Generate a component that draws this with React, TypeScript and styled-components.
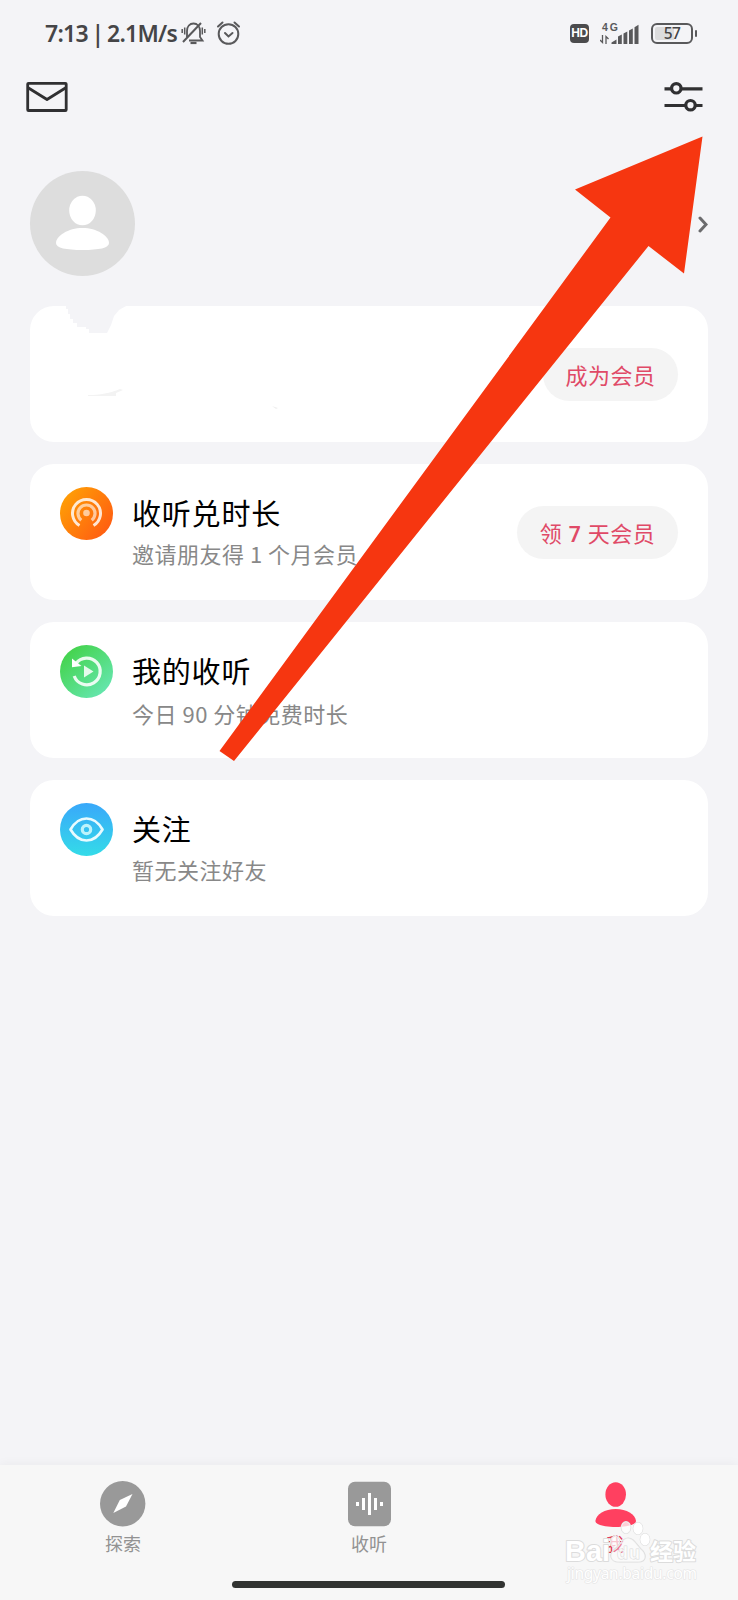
import React from 'react';
import styled, { createGlobalStyle } from 'styled-components';

const GlobalStyle = createGlobalStyle`
  * { box-sizing: border-box; }
  body {
    margin: 0;
    background: #f4f4f7;
    font-family: 'Noto Sans', 'Noto Sans CJK SC', sans-serif;
  }
  svg { display: block; flex: none; }
`;

const Screen = styled.div`
  position: relative;
  display: flex;
  flex-direction: column;
  width: 738px;
  height: 1600px;
  overflow: hidden;
  background: #f4f4f7;
`;

const StatusBar = styled.header`
  display: flex;
  align-items: center;
  height: 66px;
  padding: 0 41px 0 45px;
`;

const Clock = styled.span`
  width: 136px;
  font: 600 23px/30px 'Noto Sans', sans-serif;
  letter-spacing: -0.75px;
  word-spacing: -1.6px;
  color: #454547;
  white-space: nowrap;
`;

const StatusIcons = styled.div<{ $end?: boolean }>`
  display: flex;
  align-items: center;
  gap: ${(p) => (p.$end ? 11 : 10)}px;
  margin-left: ${(p) => (p.$end ? 'auto' : '0')};
`;

const HdBadge = styled.span`
  width: 19px;
  height: 19px;
  border-radius: 4px;
  background: #4b4b4d;
  color: #fff;
  font: 700 12px/19px 'Liberation Sans', sans-serif;
  letter-spacing: -0.5px;
  text-align: center;
`;

const Battery = styled.div`
  display: flex;
  align-items: center;
  gap: 1.5px;
  &::after {
    content: '';
    width: 2.5px;
    height: 7px;
    border-radius: 1px;
    background: #59595b;
  }
`;

const BatteryLevel = styled.span`
  width: 42px;
  height: 21px;
  border: 2px solid #59595b;
  border-radius: 6px;
  background: linear-gradient(90deg, #dcdcdd 56%, #f4f4f7 56%);
  background-clip: content-box;
  padding: 2px;
  font: 500 15.5px/13px 'Noto Sans', sans-serif;
  letter-spacing: -0.5px;
  text-align: center;
  color: #444446;
`;

const Toolbar = styled.div`
  display: flex;
  justify-content: space-between;
  padding: 15px 35px 0 26px;
  height: 105px;
`;

const Profile = styled.div`
  display: flex;
  align-items: center;
  justify-content: space-between;
  height: 105px;
  padding: 0 30px;
`;

const Avatar = styled.div`
  width: 105px;
  height: 105px;
  border-radius: 50%;
  background: #dddddd;
`;

const CardList = styled.main`
  display: flex;
  flex-direction: column;
  gap: 22px;
  padding: 30px 30px 0;
`;

const Card = styled.section`
  position: relative;
  display: flex;
  align-items: flex-start;
  height: 136px;
  padding: 23px 30px 0;
  border-radius: 24px;
  background: #fff;
`;

const CardText = styled.div<{ $gap: number }>`
  display: flex;
  flex-direction: column;
  gap: ${(p) => p.$gap}px;
  padding: 4px 0 0 19px;
`;

const CardTitle = styled.h2`
  margin: 0;
  font: 400 29px/42px 'Noto Sans CJK SC', sans-serif;
  letter-spacing: 0.8px;
  color: #000;
  white-space: nowrap;
`;

const CardNote = styled.p`
  margin: 0;
  font: 400 22px/32px 'Noto Sans CJK SC', sans-serif;
  letter-spacing: 0.5px;
  color: #888;
  white-space: nowrap;
`;

const Pill = styled.button<{ $width: number }>`
  align-self: flex-start;
  width: ${(p) => p.$width}px;
  height: 53px;
  margin: 19px 0 0 auto;
  padding: 0;
  border: 0;
  border-radius: 27px;
  background: #f4f4f4;
  font: 400 22px/53px 'Noto Sans CJK SC', sans-serif;
  letter-spacing: 0.5px;
  word-spacing: 1px;
  color: #e04a67;
  white-space: nowrap;
  b { font: 600 21px 'Noto Sans', sans-serif; }
`;

const Erased = styled.svg`
  position: absolute;
  left: 0;
  top: 0;
`;

const TabBar = styled.nav`
  display: flex;
  position: relative;
  height: 135px;
  margin-top: auto;
  background: #f7f7f7;
  box-shadow: 0 -1px 10px rgba(0, 0, 0, 0.045);
`;

const Tab = styled.a<{ $active?: boolean }>`
  flex: 1;
  display: flex;
  flex-direction: column;
  align-items: center;
  gap: 3px;
  padding-top: 16px;
  font: 400 18px/26px 'Noto Sans CJK SC', sans-serif;
  color: ${(p) => (p.$active ? '#e23c5c' : '#929292')};
`;

const HomeIndicator = styled.div`
  position: absolute;
  left: 232px;
  bottom: 12px;
  width: 273px;
  height: 7px;
  border-radius: 4px;
  background: #323432;
`;

const Overlay = styled.svg`
  position: absolute;
  inset: 0;
  pointer-events: none;
`;

const MutedBell = () => (
  <svg width="25" height="24" viewBox="0 0 25 24" fill="none" stroke="#59595b" strokeWidth="1.8">
    <path d="M6 16V10C6 5.500 8.700 2.500 12.500 2.500S19 5.500 19 10v6l2.500 3.500H8" />
    <path d="M2 21 20 2" strokeWidth="2" />
    <path d="M9.500 22h6" strokeWidth="2.200" />
    <path d="M3.700 6.500v7M1.200 8v4M21.300 6.500v7M23.800 8v4" strokeWidth="1.500" />
  </svg>
);

const Alarm = () => (
  <svg width="25" height="24" viewBox="0 0 25 24" fill="none" stroke="#59595b" strokeWidth="2" strokeLinecap="round">
    <circle cx="12.500" cy="13" r="9.800" />
    <path d="m9 12 3.500 3.500L16.500 12M2 5.500l4.500-4M18.500 1.500l4.500 4" />
  </svg>
);

const Signal = () => (
  <svg width="40" height="23" viewBox="0 0 40 23">
    <text x="2" y="8.800" fontFamily="Liberation Sans, sans-serif" fontWeight="700" fontSize="10.500" fill="#59595b" textLength="16">4G</text>
    <path d="M2.500 13v7.500L0 18M6 22v-7.500L8.500 17" fill="none" stroke="#59595b" strokeWidth="1.300" />
    <path d="M11.500 22v-1.500l5-3V22zM18 14.500l3.800-2V22H18zM23.500 11.500l3.800-2V22h-3.800zM29 8.500l3.800-2V22H29zM34.500 5.200l4-2.500V22h-4z" fill="#59595b" />
  </svg>
);

const Mail = () => (
  <svg width="42" height="31" viewBox="0 0 42 31" fill="none" stroke="#303032" strokeWidth="2.800" strokeLinejoin="round">
    <rect x="1.700" y="2.300" width="38.500" height="27.200" rx="0.800" />
    <path d="m1.700 6.500 19.300 12 19.200-12" />
  </svg>
);

const Sliders = () => (
  <svg width="39" height="31" viewBox="0 0 39 31" fill="#f4f4f7" stroke="#303032" strokeWidth="3.200">
    <path d="M.500 7.800h38M.500 24.500h38" />
    <circle cx="12.300" cy="7.300" r="4.700" />
    <circle cx="26.500" cy="24.200" r="4.700" />
  </svg>
);

const Person = () => (
  <svg width="105" height="105" viewBox="0 0 105 105" fill="#fff">
    <ellipse cx="52.500" cy="39.500" rx="13.300" ry="14.800" />
    <path d="M26 72c0-7 12-15 26.500-15S79 65 79 72c0 5-10 7-26.500 7S26 77 26 72Z" />
  </svg>
);

const Broadcast = () => (
  <svg width="53" height="53" viewBox="0 0 53 53" fill="none">
    <defs>
      <linearGradient id="orange" x1="0" y1="0.200" x2="0.900" y2="0.900">
        <stop stopColor="#ffa005" />
        <stop offset="1" stopColor="#ff5c12" />
      </linearGradient>
    </defs>
    <circle cx="26.500" cy="26.500" r="26.500" fill="url(#orange)" />
    <path d="M19.500 38.500A14 14 0 1 1 33.500 38.500" stroke="#fff" strokeOpacity=".82" strokeWidth="3" />
    <path d="M21.300 33.200A8.500 8.500 0 1 1 31.700 33.200" stroke="#fff" strokeOpacity=".6" strokeWidth="3.200" />
    <circle cx="26.500" cy="26" r="3.300" fill="#fff" fillOpacity=".6" />
  </svg>
);

const Replay = () => (
  <svg width="53" height="53" viewBox="0 0 53 53" fill="none">
    <defs>
      <linearGradient id="green" x1="0.150" y1="0.100" x2="0.850" y2="0.900">
        <stop stopColor="#44d34c" />
        <stop offset="1" stopColor="#65e6ae" />
      </linearGradient>
    </defs>
    <circle cx="26.500" cy="26.500" r="26.500" fill="url(#green)" />
    <path d="M16 18.500A13.400 13.400 0 1 1 14.200 31" stroke="#fff" strokeOpacity=".88" strokeWidth="3.200" />
    <path d="M12 13.500v8.800l9.500-1.300Z" fill="#fff" />
    <path d="m24 20.500 9.500 6-9.500 6Z" fill="#fff" fillOpacity=".85" />
  </svg>
);

const Eye = () => (
  <svg width="53" height="53" viewBox="0 0 53 53" fill="none">
    <defs>
      <linearGradient id="blue" x1="0" y1="0" x2="0" y2="1">
        <stop stopColor="#39a8fa" />
        <stop offset="1" stopColor="#34dbe8" />
      </linearGradient>
    </defs>
    <circle cx="26.500" cy="26.500" r="26.500" fill="url(#blue)" />
    <path d="M10.500 26.500C15 18.700 20 15.500 26.500 15.500s11.500 3.200 16 11c-4.500 7.800-9.500 11-16 11s-11.500-3.200-16-11Z" stroke="#e8fbff" strokeWidth="2.700" strokeLinejoin="round" />
    <circle cx="26.500" cy="26.500" r="4.200" stroke="#bdf3fb" strokeWidth="3.200" />
  </svg>
);

const Compass = () => (
  <svg width="46" height="46" viewBox="0 0 46 46">
    <circle cx="22.700" cy="22.700" r="22.700" fill="#999" />
    <path d="m32.500 13-6.500 12.500L13.300 32l6.500-13Z" fill="#fff" />
  </svg>
);

const Wave = () => (
  <svg width="46" height="46" viewBox="0 0 46 46">
    <rect x="2" y=".700" width="43" height="44.500" rx="7" fill="#999" />
    <path d="M11.500 21v4M17.500 17v12M23.500 12v22M29.500 17v12M35.500 21v4" stroke="#fff" strokeWidth="3" />
  </svg>
);

const Me = () => (
  <svg width="46" height="46" viewBox="0 0 46 46" fill="#ff4060">
    <ellipse cx="23.700" cy="13.500" rx="10.300" ry="12.300" />
    <path d="M3.400 40C4.200 33 12.700 28 23.700 28s19.500 5 20.300 12c0 4-10 6-20.300 6S3.400 44 3.400 40Z" />
  </svg>
);

const Watermark = () => (
  <g fill="#fff" stroke="#dcdcdc" strokeWidth="2" paintOrder="stroke" strokeLinejoin="round">
    <g strokeWidth="1.200">
      <ellipse cx="615" cy="1542" rx="4.500" ry="6" fillOpacity=".7" />
      <ellipse cx="626" cy="1527.500" rx="4.700" ry="6" fillOpacity=".75" />
      <ellipse cx="638" cy="1528.500" rx="4.700" ry="6" />
      <ellipse cx="645" cy="1539.500" rx="4.700" ry="6" />
      <path d="M628 1538c6 0 8 6 13 11 5 4 7 13-3 13h-19c-10 0-10-9-4-13 5-4 7-11 13-11Z" fillOpacity=".35" />
    </g>
    <text x="565" y="1561" fontFamily="Liberation Sans, sans-serif" fontWeight="700" fontSize="29" textLength="45" lengthAdjust="spacingAndGlyphs">Bai</text>
    <text x="617" y="1559" fontFamily="Liberation Sans, sans-serif" fontWeight="700" fontSize="18" textLength="23" fillOpacity=".7" strokeWidth="1">du</text>
    <text x="650" y="1560" fontFamily="Noto Sans CJK SC, sans-serif" fontWeight="700" fontSize="23" textLength="46">经验</text>
    <text x="567" y="1579" fontFamily="Noto Sans, sans-serif" fontSize="15.500" strokeWidth="1.200" stroke="#e4e4e4" textLength="130">jingyan.baidu.com</text>
  </g>
);

export default function App() {
  return (
    <Screen>
      <GlobalStyle />
      <StatusBar>
        <Clock>7:13 | 2.1M/s</Clock>
        <StatusIcons><MutedBell /><Alarm /></StatusIcons>
        <StatusIcons $end>
          <HdBadge>HD</HdBadge>
          <Signal />
          <Battery><BatteryLevel>57</BatteryLevel></Battery>
        </StatusIcons>
      </StatusBar>
      <Toolbar><Mail /><Sliders /></Toolbar>
      <Profile>
        <Avatar><Person /></Avatar>
        <svg width="10" height="18" viewBox="0 0 10 18" fill="none" stroke="#6b6b6d" strokeWidth="3" strokeLinecap="round">
          <path d="m2 3 6 6.500-6 6.500" />
        </svg>
      </Profile>
      <CardList>
        <Card>
          <Erased width="260" height="110" viewBox="0 0 260 110">
            <path d="M36 0h60l-7 4-5 6-3 9-4 8H59v-4h-3v-2h-9v-4h-4v-4h-3v-5h-2V3h-2Z" fill="#f4f4f7" />
            <path d="M58 90v-1c12 0 22-2 32-6l3 1-7 3v3Z" fill="#f3f3f3" />
            <path d="m242 100 6 2-2 1Z" fill="#efefef" />
          </Erased>
          <Pill $width={135}>成为会员</Pill>
        </Card>
        <Card>
          <Broadcast />
          <CardText $gap={4}>
            <CardTitle>收听兑时长</CardTitle>
            <CardNote>邀请朋友得 1 个月会员</CardNote>
          </CardText>
          <Pill $width={161}>领 <b>7</b> 天会员</Pill>
        </Card>
        <Card>
          <Replay />
          <CardText $gap={6}>
            <CardTitle>我的收听</CardTitle>
            <CardNote>今日 90 分钟免费时长</CardNote>
          </CardText>
        </Card>
        <Card>
          <Eye />
          <CardText $gap={4}>
            <CardTitle>关注</CardTitle>
            <CardNote>暂无关注好友</CardNote>
          </CardText>
        </Card>
      </CardList>
      <TabBar>
        <Tab><Compass />探索</Tab>
        <Tab><Wave />收听</Tab>
        <Tab $active><Me />我</Tab>
        <HomeIndicator />
      </TabBar>
      <Overlay width="738" height="1600" viewBox="0 0 738 1600">
        <path d="M702.500 136.500 575 189.500l35.500 28L219.500 751l14.500 10L648.500 246l35.500 27.500Z" fill="#f63610" />
        <Watermark />
      </Overlay>
    </Screen>
  );
}
